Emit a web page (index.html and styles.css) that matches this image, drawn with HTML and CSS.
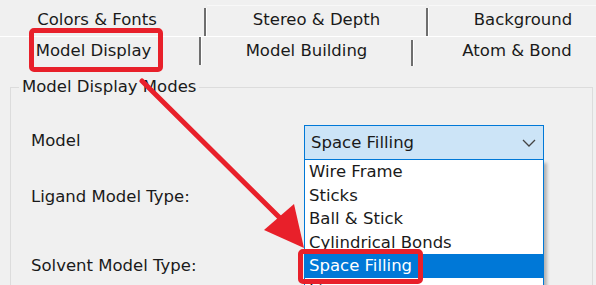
FILE: index.html
```html
<!DOCTYPE html>
<html lang="en">
<head>
  <meta charset="UTF-8">
  <title>Display Settings</title>
  <link rel="stylesheet" href="styles.css">
</head>
<body>
  <div class="dialog">
    <div class="tabs">
      <div class="tab-row top">
        <div class="tab t1">Colors &amp; Fonts</div>
        <div class="sep"></div>
        <div class="tab t2">Stereo &amp; Depth</div>
        <div class="sep"></div>
        <div class="tab t3">Background</div>
      </div>
      <div class="tab-row bottom">
        <div class="tab b1">Model Display</div>
        <div class="sep"></div>
        <div class="tab b2">Model Building</div>
        <div class="sep"></div>
        <div class="tab b3">Atom &amp; Bond</div>
      </div>
    </div>

    <fieldset class="group">
      <legend>Model Display Modes</legend>
      <div class="row first">
        <span class="label">Model</span>
        <div class="combo-wrap">
          <div class="combo">
            <span>Space Filling</span>
            <svg class="chev" width="14" height="8" viewBox="0 0 14 8"><path d="M1 1 L7 7 L13 1" fill="none" stroke="#444" stroke-width="1.3"/></svg>
          </div>
          <ul class="list">
            <li>Wire Frame</li>
            <li>Sticks</li>
            <li>Ball &amp; Stick</li>
            <li>Cylindrical Bonds</li>
            <li class="selected">Space Filling</li>
            <li>Lines</li>
          </ul>
        </div>
      </div>
      <div class="row second">
        <span class="label">Ligand Model Type:</span>
      </div>
      <div class="row third">
        <span class="label">Solvent Model Type:</span>
      </div>
    </fieldset>

    <!-- annotation overlay -->
    <div class="mark mark-tab"></div>
    <div class="mark mark-item"></div>
    <svg class="arrow" width="596" height="285" viewBox="0 0 596 285">
      <line x1="142" y1="81" x2="282" y2="220" stroke="#e8202a" stroke-width="5" stroke-linecap="round"/>
      <polygon points="304,248 264,230 294,204" fill="#e8202a"/>
    </svg>
  </div>
</body>
</html>
```

FILE: styles.css
```css
body {
  margin: 0;
  background: #f0f0f0;
  font-family: "DejaVu Sans", sans-serif;
  font-size: 16.5px;
  color: #1a1a1a;
  overflow: hidden;
}
.dialog { position: relative; width: 596px; height: 285px; overflow: hidden; }

/* Tabs */
.tabs { height: 66px; }
.tab-row { display: flex; white-space: nowrap; }
.tab-row.top { height: 36px; border-bottom: 1px solid #fff; align-items: flex-end; }
.tab-row.bottom { height: 29px; align-items: flex-start; }
.tab { text-align: center; line-height: 28px; flex-shrink: 0; }
.top .tab { padding-bottom: 2px; }
.t1 { width: 194px; padding-right: 10px; }
.t2 { width: 219px; border-top: 1px solid #f8f8f8; }
.t3 { width: 188px; border-top: 1px solid #f8f8f8; }
.b1 { width: 187px; padding-right: 12px; }
.b2 { width: 209px; }
.b3 { width: 206px; }
.sep { width: 2px; height: 28px; background: #6e6e6e; border-right: 1px solid #fff; flex-shrink: 0; }
.bottom .b2 + .sep { height: 26px; margin-top: 3px; }

/* Group box */
.group {
  margin: 11px 0 0 10px;
  width: 583px;
  padding: 0 0 40px 20px;
  border: 1px solid #dcdcdc;
  box-sizing: border-box;
}
.group legend { margin-left: -12px; padding: 0 3px; line-height: 20px; }
.row { display: grid; grid-template-columns: 273px 240px; align-items: center; height: 35px; }
.row.first { margin-top: 28px; }
.row.second { margin-top: 21px; }
.row.third { margin-top: 34px; }
.label { padding-bottom: 4px; }

/* Combo box */
.combo-wrap { position: relative; }
.combo {
  height: 35px;
  box-sizing: border-box;
  border: 1px solid #0078d7;
  background: #cce4f7;
  display: flex;
  align-items: center;
  justify-content: space-between;
  padding: 0 6px 0 6px;
}
.chev { margin-right: 1px; }
.list {
  position: absolute;
  top: 35px;
  left: 0;
  width: 240px;
  box-sizing: border-box;
  margin: 0;
  padding: 0;
  list-style: none;
  background: #fff;
  border: 1px solid #0078d7;
  border-top: none;
  box-shadow: 3px 3px 3px rgba(0, 0, 0, 0.25);
  z-index: 2;
}
.list li { line-height: 23.5px; padding-left: 4px; white-space: nowrap; }
.list li.selected { background: #0078d7; color: #fff; }

/* Red annotations */
.mark {
  position: absolute;
  border: 5px solid #e8202a;
  border-radius: 5px;
  box-sizing: border-box;
  z-index: 3;
}
.mark-tab { left: 29px; top: 28px; width: 134px; height: 44px; }
.mark-item { left: 298px; top: 249px; width: 125px; height: 35px; }
.arrow { position: absolute; left: 0; top: 0; z-index: 4; pointer-events: none; }
```
